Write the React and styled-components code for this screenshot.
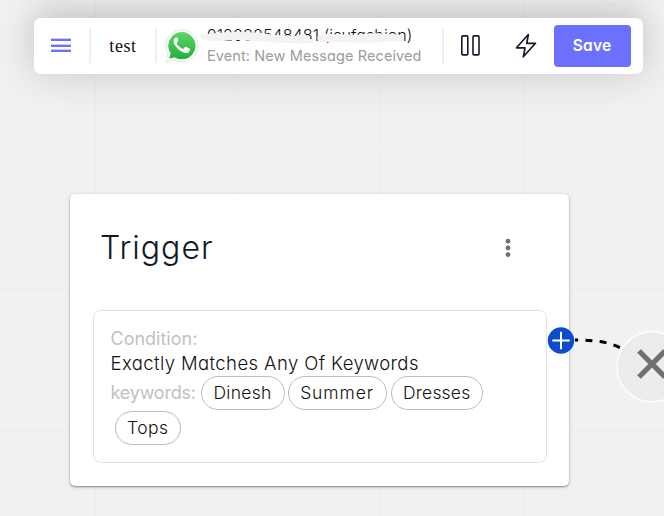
import React from "react";
import styled, { createGlobalStyle } from "styled-components";

const GlobalStyle = createGlobalStyle`
  * { box-sizing: border-box; }
  body { margin: 0; overflow: hidden; font-family: "Inter", sans-serif; font-feature-settings: "cv11"; }
`;

const Canvas = styled.main`
  position: relative;
  width: 664px;
  height: 516px;
  overflow: hidden;
  background-color: #f1f1f1;
  background-image: linear-gradient(#ececec 1px, transparent 1px),
    linear-gradient(90deg, #ececec 1px, transparent 1px);
  background-size: 142.7px 142.7px;
  background-position: 95px 3px;
`;

const Toolbar = styled.header`
  position: absolute;
  left: 33.5px;
  top: 18px;
  width: 609px;
  height: 56px;
  display: flex;
  align-items: center;
  background: #fff;
  border-radius: 7px;
  box-shadow: 0 0 42px rgba(0, 0, 0, 0.17), 0 -14px 26px rgba(0, 0, 0, 0.06);
`;

const IconButton = styled.button`
  display: flex;
  flex: none;
  align-items: center;
  justify-content: center;
  width: ${(p) => p.$width}px;
  height: 42px;
  padding: 0;
  border: 0;
  background: none;
  color: #151a2d;
`;

const Divider = styled.span`
  flex: none;
  width: 2px;
  height: 34px;
  background: #eeeeee;
`;

const FlowName = styled.span`
  flex: none;
  width: 64px;
  text-align: center;
  font: 18px "Liberation Serif", serif;
  letter-spacing: 0.6px;
  color: #111;
`;

const Channel = styled.div`
  display: flex;
  flex: none;
  align-items: center;
  width: 284.5px;
  padding-left: 7.5px;
  gap: 8.5px;
`;

const ChannelText = styled.div`
  position: relative;
  display: flex;
  flex-direction: column;
  padding-bottom: 1.5px;
  white-space: nowrap;
`;

const Account = styled.span`
  font-size: 16px;
  font-weight: 300;
  line-height: 21px;
  letter-spacing: ${(p) => p.$spacing}px;
  color: #111;
`;

const EventName = styled.span`
  margin-top: -1px;
  font-size: 14.5px;
  line-height: 21px;
  letter-spacing: 0.1px;
  color: #9b9b9b;
`;

const Smudge = styled.svg`
  position: absolute;
  left: -7px;
  top: 5px;
`;

const SaveButton = styled.button`
  flex: none;
  width: 77px;
  height: 42px;
  margin-left: auto;
  margin-right: 12px;
  padding: 0 0 1px;
  border: 0;
  border-radius: 4px;
  background: #6b71fc;
  color: #fff;
  font: 600 15.5px "Inter", sans-serif;
  letter-spacing: 0.2px;
  font-feature-settings: "cv11";
`;

const Card = styled.section`
  position: absolute;
  left: 70px;
  top: 194px;
  width: 499px;
  height: 292px;
  padding: 0 22.5px;
  background: #fff;
  border-radius: 5px;
  box-shadow: 0 1px 2px rgba(0, 0, 0, 0.42), 0 1px 6px rgba(0, 0, 0, 0.08);
`;

const CardHeader = styled.div`
  display: flex;
  align-items: center;
  justify-content: space-between;
  height: 116px;
  padding: 0 34px 8px 7.5px;
`;

const Title = styled.h1`
  margin: -2px 0 0;
  font-size: 32px;
  font-weight: 300;
  letter-spacing: 1px;
  color: #111827;
`;

const Condition = styled.div`
  height: 153px;
  padding: 14.5px 17px;
  border: 1.5px solid #e2e2e2;
  border-radius: 8px;
`;

const Line = styled.div`
  font-size: ${(p) => p.$size || 18}px;
  font-weight: ${(p) => (p.$muted ? 400 : 300)};
  line-height: 25px;
  letter-spacing: ${(p) => p.$spacing}px;
  color: ${(p) => (p.$muted ? "#c1c1c1" : "#111")};
  white-space: nowrap;
`;

const Keywords = styled.div`
  display: flex;
  align-items: center;
  height: 34px;
  margin-top: 0.5px;
  padding-left: ${(p) => p.$indent || 0}px;
`;

const KeywordLabel = styled(Line)`
  width: 90px;
  height: 27px;
`;

const Chip = styled.span`
  display: flex;
  align-items: center;
  justify-content: center;
  width: ${(p) => p.$width}px;
  height: 34px;
  margin-right: ${(p) => p.$gap || 0}px;
  padding-bottom: 1px;
  border: 1px solid #bdbdbd;
  border-radius: 17px;
  font-size: 17.5px;
  font-weight: 300;
  letter-spacing: ${(p) => p.$spacing || 0}px;
  color: #111;
`;

const Connection = styled.svg`
  position: absolute;
  left: 544px;
  top: 324px;
`;

const WhatsApp = () => (
  <svg width="34" height="34" viewBox="0 0 34 34">
    <defs>
      <linearGradient id="wa" x1="0" y1="0" x2="0" y2="1">
        <stop offset="0" stopColor="#60d66b" />
        <stop offset="1" stopColor="#20b038" />
      </linearGradient>
    </defs>
    <path d="M17 .8a16 16 0 0 0-14 23.8L.8 33.2l8.8-2.3A16 16 0 1 0 17 .8Z" fill="#fff" stroke="#e4e4e4" strokeWidth="1" />
    <path d="M17 3.1a13.6 13.6 0 0 0-11.7 20.6l.4.7-1.5 5.4 5.6-1.5.7.4A13.6 13.6 0 1 0 17 3.1Z" fill="url(#wa)" />
    <path d="M12.9 9.2c-.3-.7-.7-.8-1.2-.8-.7 0-1.3.2-1.8.8-1.9 2-1.6 4.5.1 7.1 2.5 3.7 5.4 6.3 9.4 7.5 2.4.7 5.2-.5 5.5-2.9.2-1.2.1-1.2-.7-1.6l-3-1.5c-.6-.3-.9-.2-1.3.3l-1.2 1.5c-.3.4-.7.4-1.2.1-2.6-1.1-4.5-2.8-5.8-5.2-.2-.4-.1-.7.2-1l1-1.2c.2-.3.2-.6.1-1Z" fill="#fff" />
  </svg>
);

export default function App() {
  return (
    <>
      <GlobalStyle />
      <Canvas>
        <Toolbar>
          <IconButton $width={55.5} aria-label="Menu">
            <svg width="20" height="16" viewBox="0 0 20 16" shapeRendering="crispEdges">
              <path d="M0 0h20v1H0zM0 6h20v1H0zM0 11h20v1H0z" fill="#c8caff" />
              <path d="M0 1h20v2H0zM0 7h20v2H0zM0 12h20v2H0z" fill="#6b71f8" />
            </svg>
          </IconButton>
          <Divider />
          <FlowName>test</FlowName>
          <Divider />
          <Channel>
            <WhatsApp />
            <ChannelText>
              <Account $spacing={0.1}>912000548481 (isufashion)</Account>
              <EventName>Event: New Message Received</EventName>
              <Smudge width="212" height="14" viewBox="0 0 212 14">
                <path
                  d="M0 6Q1 3 6 4L18 3Q40 1 62 3L76 5 98 6Q101 3 105 4 107 7 110 9L113 9V13Q95 14 70 12L38 10 22 11 8 11Q1 9 0 6Z"
                  fill="#f6f2f1"
                />
                <path d="M118 6Q120 3 130 4L155 5Q174 2 190 4L203 5V11Q170 13 145 12L120 12Q116 9 118 6Z" fill="#f6f2f1" />
              </Smudge>
            </ChannelText>
          </Channel>
          <Divider />
          <IconButton $width={54} aria-label="Pause">
            <svg width="22" height="22" viewBox="0 0 22 22" fill="none" stroke="currentColor" strokeWidth="1.6">
              <rect x="1.8" y="0.9" width="6" height="19" rx="1" />
              <rect x="13" y="0.9" width="6" height="19" rx="1" />
            </svg>
          </IconButton>
          <IconButton $width={56} aria-label="Automation">
            <svg width="22" height="26" viewBox="0 0 22 26" fill="none" stroke="currentColor" strokeWidth="1.7" strokeLinejoin="round">
              <path d="M13.3 1.5 1.5 14.8H10L8.3 23.8 20.5 10.3H11.8Z" />
            </svg>
          </IconButton>
          <SaveButton>Save</SaveButton>
        </Toolbar>

        <Card>
          <CardHeader>
            <Title>Trigger</Title>
            <svg width="10" height="20" viewBox="0 0 10 20" fill="#707070">
              <circle cx="5" cy="3.2" r="2.4" />
              <circle cx="5" cy="9.9" r="2.4" />
              <circle cx="5" cy="16.6" r="2.4" />
            </svg>
          </CardHeader>
          <Condition>
            <Line $muted $spacing={0}>Condition:</Line>
            <Line $size={18.5} $spacing={0.4}>Exactly Matches Any Of Keywords</Line>
            <Keywords>
              <KeywordLabel as="span" $muted $spacing={-0.2}>keywords:</KeywordLabel>
              <Chip $width={84} $gap={3} $spacing={0.3}>Dinesh</Chip>
              <Chip $width={99} $gap={4.5} $spacing={0.9}>Summer</Chip>
              <Chip $width={91.5} $spacing={0.2}>Dresses</Chip>
            </Keywords>
            <Keywords $indent={4}>
              <Chip $width={66.5} $spacing={0.4}>Tops</Chip>
            </Keywords>
          </Condition>
        </Card>

        <Connection width="120" height="82" viewBox="0 0 120 82" fill="none">
          <path d="M31 16C52 16 68 18 82 27" stroke="#000" strokeWidth="3" strokeDasharray="7 7.3" strokeDashoffset="4" />
          <circle cx="108" cy="42.7" r="35" fill="#ececec" stroke="#fff" strokeWidth="1.3" />
          <path d="M95 27 121 53M121 27 95 53" stroke="#707070" strokeWidth="5.3" />
          <circle cx="17" cy="16.5" r="13.2" fill="#0f4ccb" />
          <path d="M8.3 16.5h17.4M17 7.8v17.4" stroke="#fff" strokeWidth="2" />
        </Connection>
      </Canvas>
    </>
  );
}
